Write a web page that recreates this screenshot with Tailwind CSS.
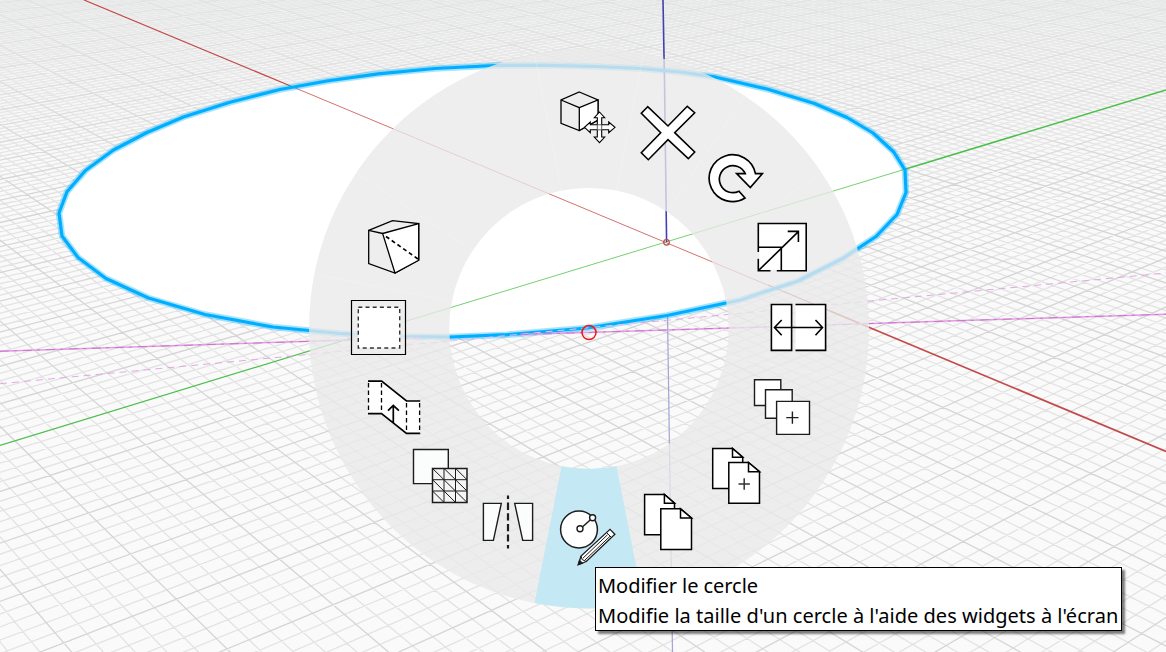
<!DOCTYPE html>
<html lang="fr">
<head>
<meta charset="utf-8">
<title>Modifier le cercle</title>
<script src="https://cdn.jsdelivr.net/npm/@tailwindcss/browser@4"></script>
</head>
<body class="relative h-[652px] w-[1166px] overflow-hidden bg-[#fafafa]">
<svg class="block h-[652px] w-[1166px]" viewBox="0 0 1166 652" fill="none">
  <defs>
    <linearGradient id="fog" x1="0" y1="0" x2="0" y2="1">
      <stop offset="0" stop-color="#e9ebea" stop-opacity=".6"/>
      <stop offset="1" stop-color="#f4f4f4" stop-opacity="0"/>
    </linearGradient>
    <clipPath id="disc"><path id="discClip"/></clipPath>
  </defs>

  <!-- ground grid -->
  <path id="minor" stroke="#e3e3e3" stroke-width="1.300"/>
  <path id="major" stroke="#d5d5d5" stroke-width="1.300"/>
  <rect width="1166" height="200" fill="url(#fog)"/>

  <!-- axes outside the circle -->
  <path d="M84 0L293 87" stroke="#c24a4a" stroke-width="1.2"/>
  <path d="M830 311L1166 451.500" stroke="#c24a4a" stroke-width="1.7"/>
  <path d="M0 445.500L430 314" stroke="#4cbf4c" stroke-width="1.25"/>
  <path d="M904 169.500L1166 90" stroke="#4cbf4c" stroke-width="1.6"/>
  <path d="M663 0L664.300 72" stroke="#4242ae" stroke-width="1.6"/>
  <path d="M667.500 315L672.500 652" stroke="#a3a3d6" stroke-width="1.2"/>

  <!-- sketched circle -->
  <path id="fill" fill="#fff"/>
  <g clip-path="url(#disc)">
    <path d="M293 87L830 311" stroke="#cf6060" stroke-width=".9"/>
    <path d="M400 323L904 169.500" stroke="#62cc62" stroke-width=".9"/>
    <path d="M664.300 66L666.600 242" stroke="#4242ae" stroke-width="1.6"/>
  </g>
  <path d="M768 285L830 311" stroke="#c24a4a" stroke-width="1.2"/>
  <path id="glow" stroke="#00aeff" stroke-opacity=".35" stroke-width="6.500" stroke-linejoin="round"/>
  <path id="edge" stroke="#00aeff" stroke-width="3.200" stroke-linejoin="round"/>
  <circle cx="666.500" cy="242.300" r="2.800" stroke="#bf4545" stroke-width="1.200"/>

  <!-- inference lines -->
  <path d="M0 383.700L450 341M640 322.800L1166 273" stroke="#e3a8e3" stroke-width="1" stroke-dasharray="7 5"/>
  <path d="M450 341L640 322.800" stroke="#eec0ee" stroke-width="1" stroke-dasharray="7 5"/>
  <path d="M0 351.200L420 337.800M520 334.600L1166 314.200" stroke="#e09ee0" stroke-width="1.500"/>
  <path d="M0 351.200L420 337.800M520 334.600L1166 314.200" stroke="#c85cc8" stroke-width=".7" stroke-dasharray="9 5 3 6"/>

  <!-- radial menu -->
  <path fill="#e9e9e9" fill-opacity=".78" fill-rule="evenodd" d="M309 328.500a280 280 0 1 0 560 0a280 280 0 1 0-560 0zM449.300 328.500a139.700 140.500 0 1 1 279.400 0a139.700 140.500 0 1 1-279.400 0z"/>
  <path id="spokes" stroke="#fff" stroke-opacity=".25" stroke-width=".7"/>
  <path fill="#c4e8f4" d="M561.500 466.300A140.500 140.500 0 0 0 616.500 466.300L643.600 603.100A280 280 0 0 1 534.400 603.100Z"/>

  <circle cx="589" cy="332.600" r="7" stroke="#f01818" stroke-width="1.500"/>

  <g stroke="#000" stroke-width="1.300">
    <!-- move -->
    <path fill="#eee" d="M579.300 92L598 100L598 120L579.300 130.500L561 123.300L561 100Z"/>
    <path fill="#fff" d="M579.300 107.700L598 100L598 120L579.300 130.500Z"/>
    <path d="M561 100L579.300 107.700"/>
    <path fill="#fff" stroke-width="1.100" d="M599.500 112L604.700 117.700H601.700V124.800H608.700V122L615 127.300L608.700 132.700V129.800H601.700V137H604.700L599.500 142.700L594.300 137H597.300V129.800H590.300V132.700L584.500 127.300L590.300 122V124.800H597.300V117.700H594.300Z"/>
    <path stroke="#555" stroke-width=".9" d="M597.300 124.800H601.700V129.800H597.300Z"/>
    <!-- delete -->
    <path fill="#fff" stroke-width="1.600" d="M647.700 106.700L641.300 113.300L660.700 132.700L641.300 152.700L648.300 159.700L668 139.700L688.300 158.700L694.700 152L674.700 132.700L694.700 112.700L687.300 106.300L668 126Z"/>
    <!-- rotate -->
    <path fill="#fff" stroke-width="1.700" d="M745 198L739 191.200A13.500 13.500 0 1 1 745.200 173.700H736.700L750.300 187.500L762.300 173.700H755.500A23.400 23.400 0 1 0 745 198Z"/>
    <!-- scale -->
    <path fill="#fff" stroke="none" d="M758.300 223.300H806.300V270.700H758.300Z"/>
    <path stroke-width="1.600" d="M758.300 252V223.500H806.200V270.800H776.700M770.500 270.800H758.300V258.700M758.300 247.200H781.300V270.800M758.300 270.800L798.600 231.400M787.700 231.400H798.400V242"/>
    <path stroke="#eee" stroke-width="2" d="M758.300 252.500V258.300M771 270.800H776.300"/>
    <!-- stretch -->
    <path fill="#fff" stroke-width="1.600" d="M771.400 304.500H791.600V350.400H771.400Z"/>
    <path fill="#fff" stroke-width="1.600" d="M795.500 304.500H825.600V350.400H795.500"/>
    <path stroke-width="1.600" d="M774.500 327.500H822.500M781.700 320L774.500 327.500L781.700 335.300M815.500 320L822.500 327.500L815.500 335.300"/>
    <!-- array -->
    <g fill="#fff" stroke="#1c1c1c" stroke-width="1.400">
      <path d="M754.500 379.700H780.800V405.500H754.500Z"/>
      <path d="M765.500 389.800H792.200V418.300H765.500Z"/>
      <path d="M776.600 401.400H809.500V434.400H776.600Z"/>
      <path d="M792.400 411.500V423.700M786.300 417.600H798.500"/>
    </g>
    <!-- array as copy -->
    <g fill="#fff" stroke-width="1.500" stroke-linejoin="miter">
      <path d="M712.700 448.500H732.500L742.700 457V488.500H712.700Z"/>
      <path d="M732.500 448.500V457.300H742.700Z"/>
      <path d="M728.800 462.500H748.500L759.500 471.500V503.200H728.800Z"/>
      <path d="M748.500 462.500V471.700H759.500Z"/>
      <path stroke="#333" d="M744.200 478.300V489.700M738.500 484H749.900"/>
      <!-- copy -->
      <path d="M644.600 494.500H664.400L674.500 503V534.700H644.600Z"/>
      <path d="M664.400 494.500V503.300H674.500Z"/>
      <path d="M660.800 508.800H680.500L691.500 518V549.400H660.800Z"/>
      <path d="M680.500 508.800V517.900H691.500Z"/>
    </g>
    <!-- edit circle -->
    <g stroke="#1c1c1c">
      <circle cx="579" cy="529.500" r="18.400" fill="#fff" stroke-width="1.500"/>
      <path stroke-width="1.500" d="M582.300 527L590.500 519.800"/>
      <circle cx="580" cy="528.800" r="3" fill="#fff" stroke-width="1.400"/>
      <circle cx="592.600" cy="517.800" r="3" fill="#fff" stroke-width="1.400"/>
      <path fill="#fff" d="M578.500 564.500L581 556L610 529.300L614.900 534.300L586.300 561.500Z"/>
      <path stroke-width="1" d="M582.800 558.300L607.500 534.800M584.800 560.200L610 536.300M606.500 532.500L611.500 537.500M581 556L582 559.500L586.300 561.500"/>
      <path fill="#1c1c1c" d="M578.200 564.800L579.500 560.500L582.300 563.300Z"/>
    </g>
    <!-- mirror -->
    <g stroke="#1c1c1c" stroke-width="1.400">
      <path fill="#fbfdfd" d="M483.400 503.400H501.300L493.400 540.400H483.400Z"/>
      <path fill="#fbfdfd" d="M514.700 503.400H532.600V540.400H522.700Z"/>
      <path stroke-width="2.200" d="M508 495.500V499M508 502.500V510M508 513.300V520.600M508 524V531.300M508 534.500V541.600M508 545V548.500"/>
    </g>
    <!-- convert to mesh -->
    <g stroke="#1c1c1c" stroke-width="1.400">
      <path fill="#fbfdfd" d="M413.500 449.500H448.300V483.600H413.500Z"/>
      <path fill="#f4f4f4" stroke-width="1.500" d="M432.500 468.400H467V502.400H432.500Z"/>
      <path stroke-width="1" d="M444 468.400V502.400M455.500 468.400V502.400M432.500 479.700H467M432.500 491H467M432.500 468.400L467 502.400M444 468.400L467 491M455.500 468.400L467 479.700M432.500 479.700L455.500 502.400M432.500 491L444 502.400"/>
    </g>
    <!-- sew faces -->
    <path fill="#fff" stroke="none" d="M368.400 381H381.400L406.500 401H419.700V433.300H406.500L381.400 413.600H368.400Z"/>
    <path stroke-width="1.700" d="M368 381.200H381.600L406.500 401H420.200M368 413.600H381.500L406.500 433.300H420.200M393.300 422.500V405.500M388 410.700L393.300 405.500L398.900 410.700"/>
    <path stroke-width="1.300" stroke-dasharray="4.500 3" d="M368.500 383V413M381.500 383V413M406.500 403V433M419.600 403V433"/>
    <!-- thin shell -->
    <path fill="#eee" fill-opacity=".6" stroke-width="1.200" d="M351.500 300.500H405.500V354.500H351.500Z"/>
    <path fill="#fff" stroke="#333" stroke-width="1.400" stroke-dasharray="4 3.200" d="M358.300 307.200H399.700V348H358.300Z"/>
    <!-- taper -->
    <path fill="#eee" d="M368.700 230.300L392.500 220.700L418.700 223.700V260.200L395 273L368.700 263.500Z"/>
    <path fill="#fff" d="M382.600 233.500L418.700 223.700V260.200L395 273Z"/>
    <path d="M368.700 230.300L382.600 233.500"/>
    <path stroke-width="1.700" stroke-dasharray="4 3" d="M386 236.500L418 259"/>
  </g>
</svg>

<div class="absolute left-[595px] top-[567px] h-[64px] w-[527px] border border-black bg-white pl-[2px] pt-[3px] font-['Noto_Sans','Open_Sans',sans-serif] text-[20px] leading-[30px] whitespace-nowrap text-black shadow-[3px_3px_2px_rgba(0,0,0,0.5)]">
  <p class="w-fit tracking-[-0.05px]">Modifier le cercle</p>
  <p class="w-fit tracking-[0.02px]">Modifie la taille d'un cercle à l'aide des widgets à l'écran</p>
</div>

<script>
// ground plane (X, Y) -> screen
const P = (X, Y) => {
  const q = 1 - 0.03063 * X + 0.02734 * Y;
  return [(25.0507 * X + 72.79851 * Y + 666.3) / q, (11.51519 * X - 9.9999 * Y + 242.3) / q].map(t => t.toFixed(1)).join(' ');
};
const near = 0.4;
let minor = '', major = '';
for (let i = -300; i <= 300; i++) {
  if (i === 0) continue;
  const v = i / 5;
  const xEnd = (1 + 0.02734 * v - near) / 0.03063;
  const yEnd = (near - 1 + 0.03063 * v) / 0.02734;
  let s = '';
  if (xEnd > -60) s += 'M' + P(-60, v) + 'L' + P(xEnd, v);
  if (yEnd < 60) s += 'M' + P(v, 60) + 'L' + P(v, yEnd);
  if (i % 5) minor += s; else major += s;
}
const set = (id, d) => document.getElementById(id).setAttribute('d', d);
set('minor', minor);
set('major', major);

const ring = [[59,213],[67,191.700],[85.500,170.500],[113.500,150],[147,132.500],[183.500,117],[230,102.300],[280,89.500],[327,81],[378,73.800],[435,68.500],[495,65.500],[545,65.300],[596,66.500],[640,68.500],[680,72],[716,77.200],[767,89],[814.500,103.500],[847,117.500],[873,133],[893.500,151.700],[905,170],[906,192.500],[897,214.500],[876,236.500],[843,258.300],[798,281],[740,300],[667,315.500],[587,328],[507,334.700],[450,337],[402,336.500],[340,333.500],[273,327],[205,314.500],[148.500,298],[106,278.500],[78,257.500],[62,236]];
const d = 'M' + ring.map(p => p.join(' ')).join('L') + 'Z';
['fill', 'glow', 'edge', 'discClip'].forEach(id => set(id, d));

let spokes = '';
for (let k = 0; k < 16; k++) {
  const t = (11.25 + 22.5 * k) * Math.PI / 180, c = Math.cos(t), n = Math.sin(t);
  spokes += `M${589 + 140 * c} ${328.5 + 140 * n}L${589 + 280 * c} ${328.5 + 280 * n}`;
}
set('spokes', spokes);
</script>
</body>
</html>
